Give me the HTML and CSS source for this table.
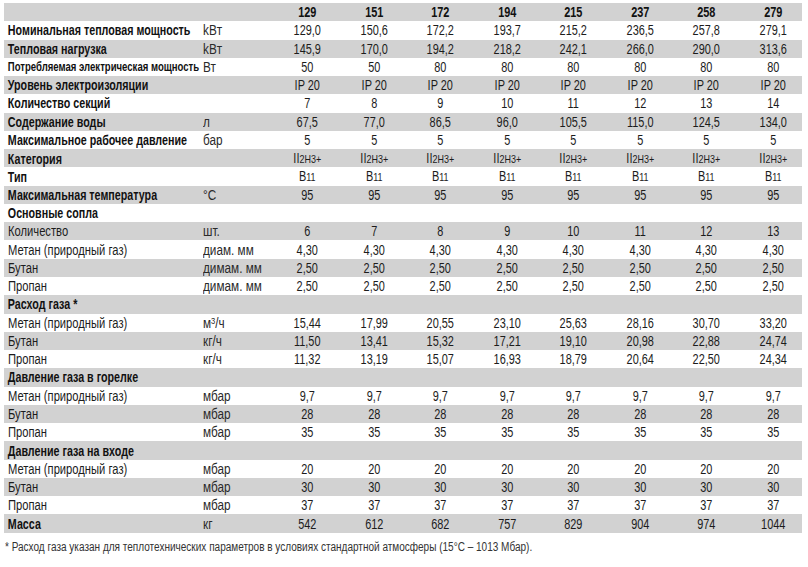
FILE: index.html
```html
<!DOCTYPE html>
<html lang="ru">
<head>
<meta charset="utf-8">
<link rel="stylesheet" href="styles.css">
</head>
<body>
<div class="table">
  <div class="row head"><span class="lbl"></span><span class="unit"></span><span>129</span><span>151</span><span>172</span><span>194</span><span>215</span><span>237</span><span>258</span><span>279</span></div>
  <div class="row"><span class="lbl b">Номинальная тепловая мощность</span><span class="unit">kBт</span><span>129,0</span><span>150,6</span><span>172,2</span><span>193,7</span><span>215,2</span><span>236,5</span><span>257,8</span><span>279,1</span></div>
  <div class="row"><span class="lbl b">Тепловая нагрузка</span><span class="unit">kBт</span><span>145,9</span><span>170,0</span><span>194,2</span><span>218,2</span><span>242,1</span><span>266,0</span><span>290,0</span><span>313,6</span></div>
  <div class="row"><span class="lbl b sm">Потребляемая электрическая мощность</span><span class="unit">Вт</span><span>50</span><span>50</span><span>80</span><span>80</span><span>80</span><span>80</span><span>80</span><span>80</span></div>
  <div class="row"><span class="lbl b">Уровень электроизоляции</span><span class="unit"></span><span>IP 20</span><span>IP 20</span><span>IP 20</span><span>IP 20</span><span>IP 20</span><span>IP 20</span><span>IP 20</span><span>IP 20</span></div>
  <div class="row"><span class="lbl b">Количество секций</span><span class="unit"></span><span>7</span><span>8</span><span>9</span><span>10</span><span>11</span><span>12</span><span>13</span><span>14</span></div>
  <div class="row"><span class="lbl b">Содержание воды</span><span class="unit">л</span><span>67,5</span><span>77,0</span><span>86,5</span><span>96,0</span><span>105,5</span><span>115,0</span><span>124,5</span><span>134,0</span></div>
  <div class="row"><span class="lbl b">Максимальное рабочее давление</span><span class="unit">бар</span><span>5</span><span>5</span><span>5</span><span>5</span><span>5</span><span>5</span><span>5</span><span>5</span></div>
  <div class="row"><span class="lbl b">Категория</span><span class="unit"></span><span>II<small>2H3+</small></span><span>II<small>2H3+</small></span><span>II<small>2H3+</small></span><span>II<small>2H3+</small></span><span>II<small>2H3+</small></span><span>II<small>2H3+</small></span><span>II<small>2H3+</small></span><span>II<small>2H3+</small></span></div>
  <div class="row"><span class="lbl b">Тип</span><span class="unit"></span><span>B<small>11</small></span><span>B<small>11</small></span><span>B<small>11</small></span><span>B<small>11</small></span><span>B<small>11</small></span><span>B<small>11</small></span><span>B<small>11</small></span><span>B<small>11</small></span></div>
  <div class="row"><span class="lbl b">Максимальная температура</span><span class="unit">°C</span><span>95</span><span>95</span><span>95</span><span>95</span><span>95</span><span>95</span><span>95</span><span>95</span></div>
  <div class="row"><span class="lbl b">Основные сопла</span></div>
  <div class="row"><span class="lbl">Количество</span><span class="unit">шт.</span><span>6</span><span>7</span><span>8</span><span>9</span><span>10</span><span>11</span><span>12</span><span>13</span></div>
  <div class="row"><span class="lbl">Метан (природный газ)</span><span class="unit">диам. мм</span><span>4,30</span><span>4,30</span><span>4,30</span><span>4,30</span><span>4,30</span><span>4,30</span><span>4,30</span><span>4,30</span></div>
  <div class="row"><span class="lbl">Бутан</span><span class="unit">димам. мм</span><span>2,50</span><span>2,50</span><span>2,50</span><span>2,50</span><span>2,50</span><span>2,50</span><span>2,50</span><span>2,50</span></div>
  <div class="row"><span class="lbl">Пропан</span><span class="unit">димам. мм</span><span>2,50</span><span>2,50</span><span>2,50</span><span>2,50</span><span>2,50</span><span>2,50</span><span>2,50</span><span>2,50</span></div>
  <div class="row"><span class="lbl b">Расход газа *</span></div>
  <div class="row"><span class="lbl">Метан (природный газ)</span><span class="unit">м<sup>3</sup>/ч</span><span>15,44</span><span>17,99</span><span>20,55</span><span>23,10</span><span>25,63</span><span>28,16</span><span>30,70</span><span>33,20</span></div>
  <div class="row"><span class="lbl">Бутан</span><span class="unit">кг/ч</span><span>11,50</span><span>13,41</span><span>15,32</span><span>17,21</span><span>19,10</span><span>20,98</span><span>22,88</span><span>24,74</span></div>
  <div class="row"><span class="lbl">Пропан</span><span class="unit">кг/ч</span><span>11,32</span><span>13,19</span><span>15,07</span><span>16,93</span><span>18,79</span><span>20,64</span><span>22,50</span><span>24,34</span></div>
  <div class="row"><span class="lbl b">Давление газа в горелке</span></div>
  <div class="row"><span class="lbl">Метан (природный газ)</span><span class="unit">мбар</span><span>9,7</span><span>9,7</span><span>9,7</span><span>9,7</span><span>9,7</span><span>9,7</span><span>9,7</span><span>9,7</span></div>
  <div class="row"><span class="lbl">Бутан</span><span class="unit">мбар</span><span>28</span><span>28</span><span>28</span><span>28</span><span>28</span><span>28</span><span>28</span><span>28</span></div>
  <div class="row"><span class="lbl">Пропан</span><span class="unit">мбар</span><span>35</span><span>35</span><span>35</span><span>35</span><span>35</span><span>35</span><span>35</span><span>35</span></div>
  <div class="row"><span class="lbl b">Давление газа на входе</span></div>
  <div class="row"><span class="lbl">Метан (природный газ)</span><span class="unit">мбар</span><span>20</span><span>20</span><span>20</span><span>20</span><span>20</span><span>20</span><span>20</span><span>20</span></div>
  <div class="row"><span class="lbl">Бутан</span><span class="unit">мбар</span><span>30</span><span>30</span><span>30</span><span>30</span><span>30</span><span>30</span><span>30</span><span>30</span></div>
  <div class="row"><span class="lbl">Пропан</span><span class="unit">мбар</span><span>37</span><span>37</span><span>37</span><span>37</span><span>37</span><span>37</span><span>37</span><span>37</span></div>
  <div class="row"><span class="lbl b">Масса</span><span class="unit">кг</span><span>542</span><span>612</span><span>682</span><span>757</span><span>829</span><span>904</span><span>974</span><span>1044</span></div>
</div>
<p class="note"><span>* Расход газа указан для теплотехнических параметров в условиях стандартной атмосферы (15°C – 1013 Мбар).</span></p>
</body>
</html>
```

FILE: styles.css
```css
html, body {
  margin: 0;
  padding: 0;
  background: #ffffff;
}
body {
  font-family: "Liberation Sans", Arial, sans-serif;
  color: #1c1c1c;
}
.table {
  margin: 3px 0 0 4px;
  width: 798px;
}
.row {
  display: grid;
  grid-template-columns: 199px 71px repeat(8, 66.5px);
  height: 18.28px;
  align-items: center;
  font-size: 14px;
  line-height: 18px;
}
.row:nth-child(odd) {
  background: #d2d2d2;
}
.row > span {
  text-align: center;
  white-space: nowrap;
  transform: scaleX(0.78);
  transform-origin: center;
}
.row > .lbl {
  text-align: left;
  padding-left: 5px;
  transform-origin: left center;
  transform: scaleX(0.8);
}
.row > .lbl.b {
  transform: scaleX(0.765);
}
.row > .unit {
  text-align: left;
  color: #2a2a2a;
  transform-origin: left center;
  transform: scaleX(0.84);
}
.b {
  font-weight: bold;
  color: #111;
}
.row > .sm {
  font-size: 12.5px;
  transform: scaleX(0.73);
}
.head > span {
  font-weight: bold;
  color: #111;
}
small {
  font-size: 11.5px;
}
sup {
  font-size: 9px;
  line-height: 0;
  vertical-align: 4px;
}
.note {
  margin: 7px 0 0 5px;
  font-size: 12px;
  color: #333;
  white-space: nowrap;
}
.note > span {
  display: inline-block;
  transform: scaleX(0.835);
  transform-origin: left center;
}
```
